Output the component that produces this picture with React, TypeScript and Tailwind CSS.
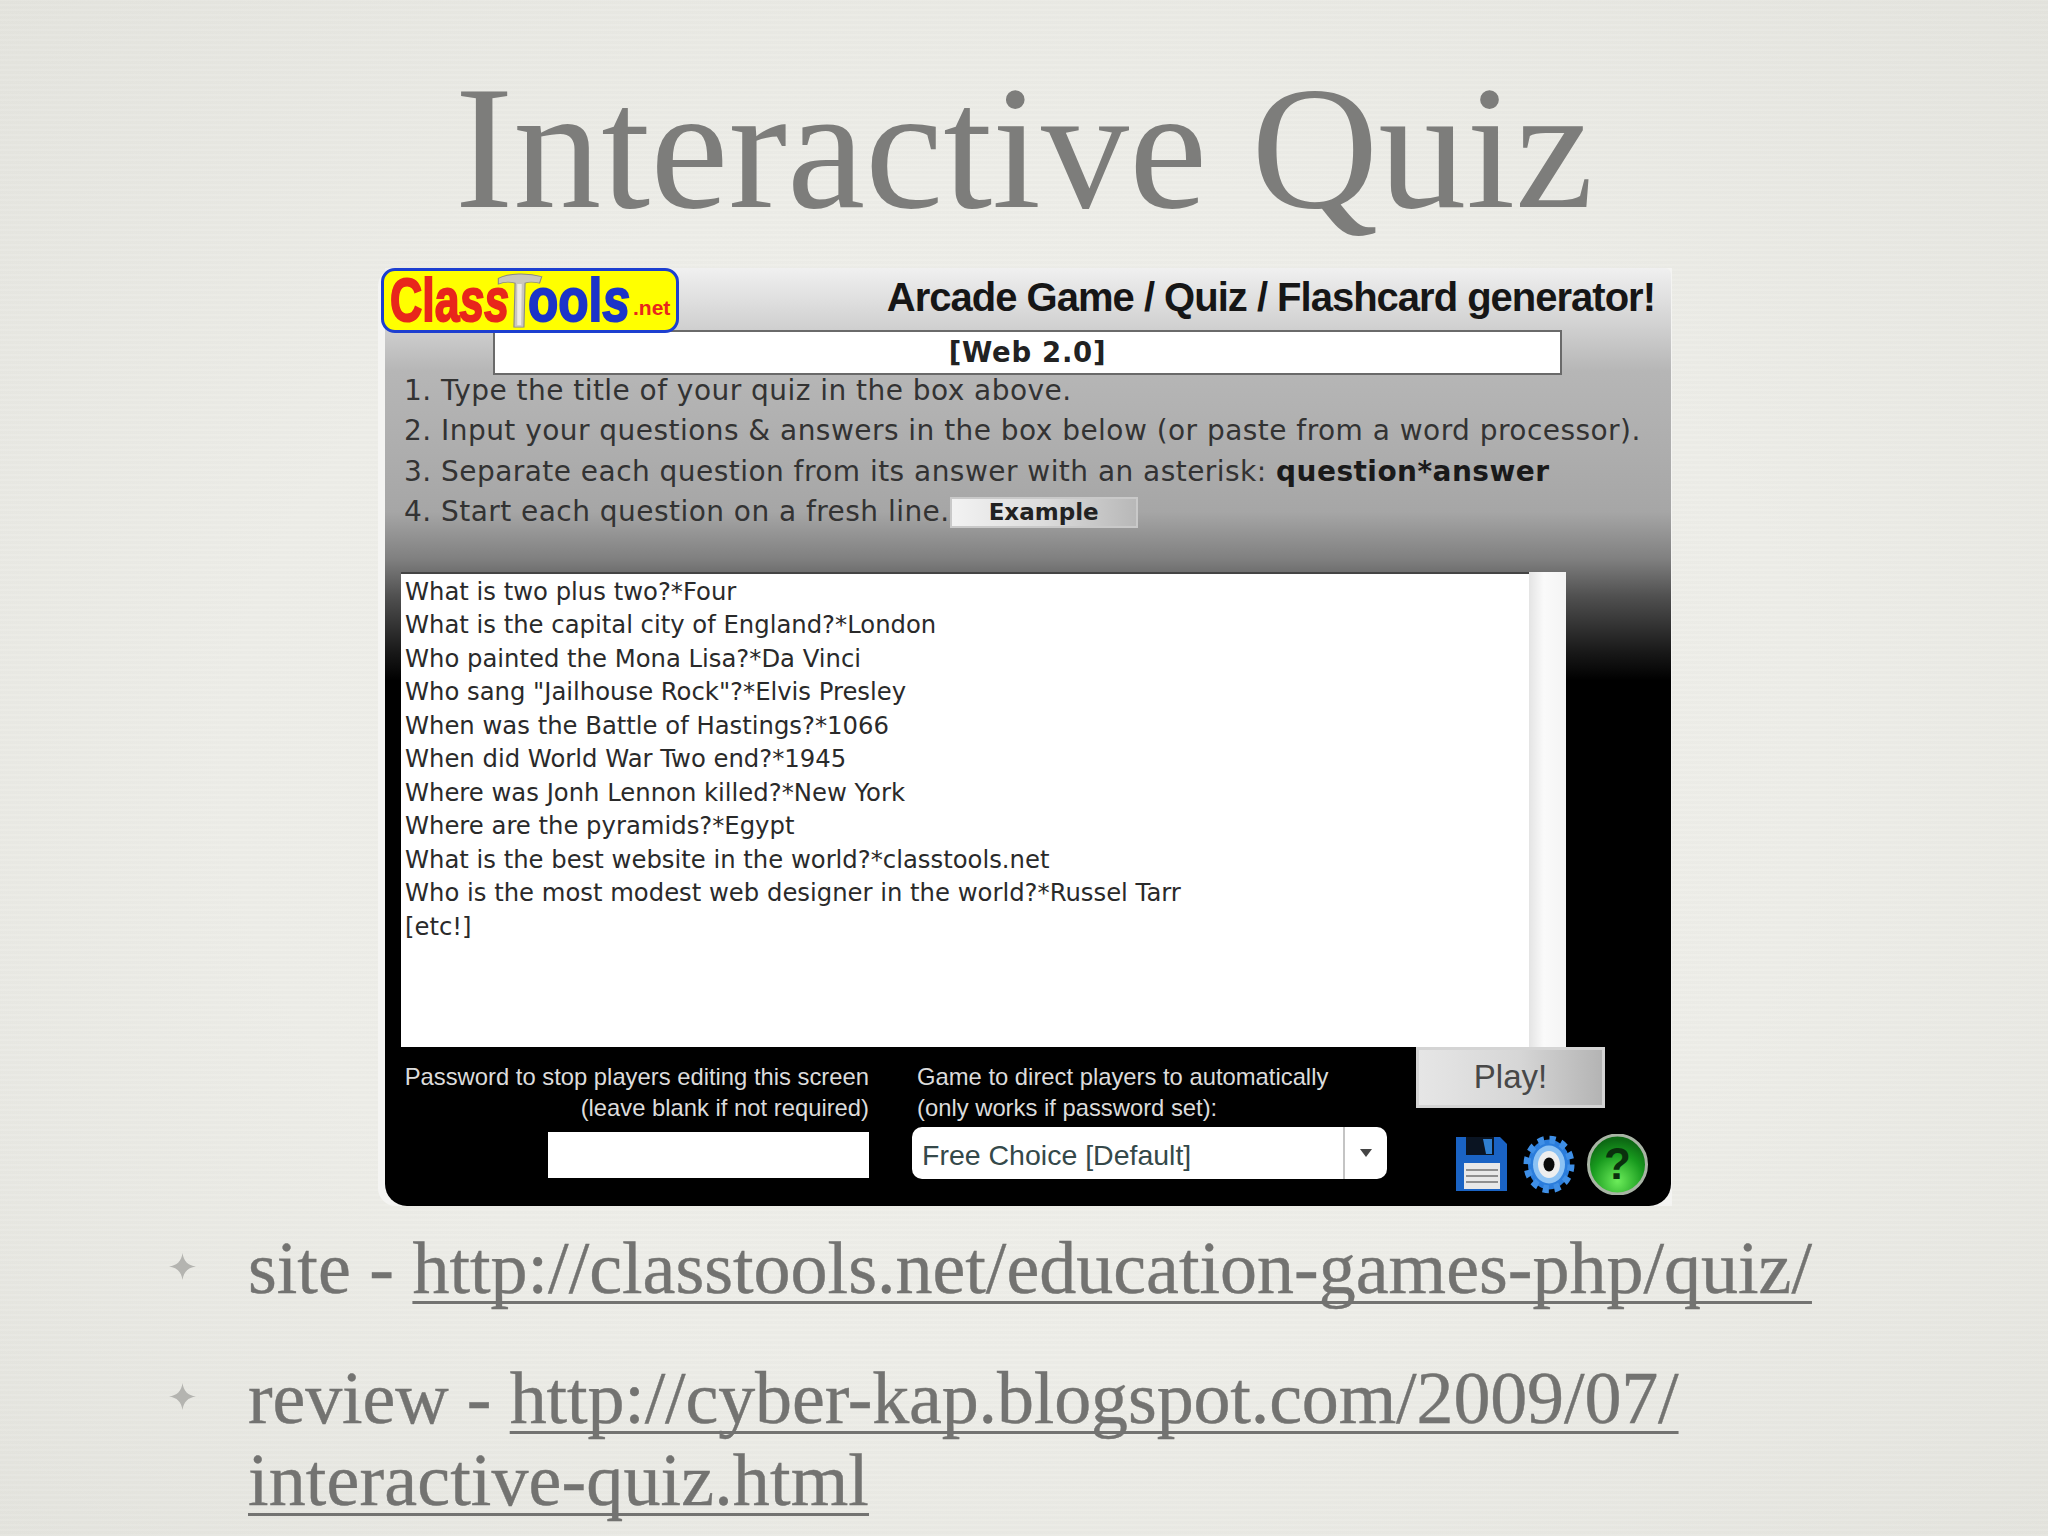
function Star() {
  return (
    <svg width="27" height="27" viewBox="0 0 27 27" className="shrink-0">
      <path d="M13.5 0C14.5 8 19 12.5 27 13.5C19 14.5 14.5 19 13.5 27C12.5 19 8 14.5 0 13.5C8 12.5 12.5 8 13.5 0Z" fill="#b4b4b0" />
    </svg>
  );
}

function Hammer() {
  return (
    <svg width="49" height="58" viewBox="0 0 44 62" preserveAspectRatio="none" className="-mr-[16px] -ml-[15px] shrink-0 self-start">
      <path d="M3 8C12 2 30 2 42 6L40 13C32 11 29 12 27 13L26 60H17L18 13C12 11 7 12 3 14Z" fill="#c9c6bd" stroke="#8a8a84" strokeWidth="1" />
      <path d="M20 14H24L23.5 58H20Z" fill="#efece2" />
    </svg>
  );
}

function Logo() {
  return (
    <div className="relative z-10 -ml-[4px] flex h-[65px] w-[298px] translate-y-[1px] items-center rounded-[14px] border-[3px] border-[#1d3fd0] bg-[#ffff00] pl-[6px] font-['Liberation_Sans',sans-serif] font-bold">
      <span className="inline-block w-[120px] origin-left scale-x-[0.72] text-[62px] leading-none whitespace-nowrap text-[#e8261c] [-webkit-text-stroke:2px_#e8261c]">
        Cla<i>ss</i>
      </span>
      <Hammer />
      <span className="inline-block w-[105px] origin-left scale-x-[0.8] text-[62px] leading-none whitespace-nowrap text-[#1c34c8] [-webkit-text-stroke:2px_#1c34c8]">
        ool<i>s</i>
      </span>
      <span className="mt-[14px] text-[21px] leading-none text-[#e8261c]">.net</span>
    </div>
  );
}

function Floppy() {
  return (
    <svg width="51" height="54" viewBox="0 0 51 54" className="shrink-0">
      <path d="M0 0H44L51 7V54H0Z" fill="#1a63c4" />
      <path d="M10 0H38V18H10Z" fill="#0a1422" />
      <path d="M27 2H36V17H30Z" fill="#2f7fd0" />
      <path d="M8 26H44V52H8Z" fill="#e8e8e8" />
      <path d="M10 33H42M10 39H42M10 45H42" stroke="#8f8f8f" strokeWidth="2" />
    </svg>
  );
}

function Gear() {
  return (
    <svg width="52" height="59" viewBox="0 0 52 59" className="shrink-0">
      <ellipse cx="26" cy="29.5" rx="21" ry="25" fill="#2b7ddc" />
      <circle cx="26" cy="29.5" r="22" fill="none" stroke="#3f8fe6" strokeWidth="7" strokeDasharray="6 5.5" transform="translate(0 -3.9) scale(1 1.13)" />
      <ellipse cx="26" cy="29.5" rx="16" ry="19" fill="#8cc2f4" />
      <ellipse cx="26" cy="29.5" rx="11" ry="13.5" fill="#eeeeee" />
      <ellipse cx="26" cy="29.5" rx="5.5" ry="7" fill="#0a0a0a" />
    </svg>
  );
}

function Help() {
  return (
    <svg width="61" height="61" viewBox="0 0 61 61" className="-ml-[4px] shrink-0">
      <defs>
        <radialGradient id="helpGreen" cx="50%" cy="78%" r="70%">
          <stop offset="0%" stopColor="#6cec5a" />
          <stop offset="65%" stopColor="#189a1e" />
          <stop offset="100%" stopColor="#0d6a14" />
        </radialGradient>
      </defs>
      <ellipse cx="30.5" cy="30.5" rx="29" ry="29.5" fill="url(#helpGreen)" stroke="#a8b4a4" strokeWidth="3" />
      <text x="30.5" y="45" textAnchor="middle" fontSize="44" fontWeight="700" fontFamily="'Liberation Sans', sans-serif" fill="#0a300d">?</text>
    </svg>
  );
}

const steps = [
  "1. Type the title of your quiz in the box above.",
  "2. Input your questions & answers in the box below (or paste from a word processor).",
];

const quizLines = [
  "What is two plus two?*Four",
  "What is the capital city of England?*London",
  "Who painted the Mona Lisa?*Da Vinci",
  'Who sang "Jailhouse Rock"?*Elvis Presley',
  "When was the Battle of Hastings?*1066",
  "When did World War Two end?*1945",
  "Where was Jonh Lennon killed?*New York",
  "Where are the pyramids?*Egypt",
  "What is the best website in the world?*classtools.net",
  "Who is the most modest web designer in the world?*Russel Tarr",
  "[etc!]",
];

function QuizPanel() {
  return (
    <div className="ml-[378px] h-[938px] w-[1294px] rounded-l-[18px] bg-[#f4f4f2] pl-[7px] blur-[0.5px]">
      <div className="h-full w-[1286px] rounded-b-[22px] rounded-tr-[6px] bg-[linear-gradient(180deg,#f0f0f0_0%,#d2d2d2_6%,#b6b6b6_11%,#adadad_20%,#a6a6a6_26%,#808080_31%,#505050_35%,#181818_41%,#000000_44%)]">
        <div className="flex h-[62px] items-center justify-between pr-[16px]">
          <Logo />
          <div className="pb-[4px] font-['Liberation_Sans',sans-serif] text-[40px] font-bold tracking-[-1px] whitespace-nowrap text-[#161616]">
            Arcade Game / Quiz / Flashcard generator!
          </div>
        </div>

        <div className="ml-[108px] flex h-[45px] w-[1069px] items-center justify-center border-2 border-[#6a6a6a] bg-white font-['DejaVu_Sans',sans-serif] text-[27.5px] font-bold tracking-[0.7px] text-[#222]">
          [Web 2.0]
        </div>

        <div className="-mt-[4px] pl-[19px] font-['DejaVu_Sans',sans-serif] text-[28px] leading-[40.4px] tracking-[0.46px] whitespace-nowrap text-[#333]">
          {steps.map((s) => (
            <div key={s}>{s}</div>
          ))}
          <div>
            3. Separate each question from its answer with an asterisk: <b className="text-[#1a1a1a]">question*answer</b>
          </div>
          <div className="flex items-center">
            <span>4. Start each question on a fresh line.</span>
            <button className="flex h-[31px] w-[188px] items-center justify-center border-2 border-[#c9c9c9] bg-[linear-gradient(90deg,#f2f2f2_0%,#dcdcdc_50%,#b8b8b8_100%)] text-[23px] font-bold tracking-normal text-[#222]">
              Example
            </button>
          </div>
        </div>

        <div className="mt-[39px] ml-[16px] flex h-[475px]">
          <div className="w-[1128px] border-t-2 border-[#444] bg-white px-[4px] pt-[1px] font-['DejaVu_Sans',sans-serif] text-[24.3px] leading-[33.5px] whitespace-nowrap text-[#2a2a2a]">
            {quizLines.map((l) => (
              <div key={l}>{l}</div>
            ))}
          </div>
          <div className="w-[37px] bg-[linear-gradient(90deg,#e4e4e4_0%,#fafafa_40%,#f4f4f4_100%)]" />
        </div>

        <div className="flex">
          <div className="w-[484px] pt-[14px] text-right font-['Liberation_Sans',sans-serif] text-[23.8px] leading-[31px] whitespace-nowrap text-[#dcdcdc]">
            <div>Password to stop players editing this screen</div>
            <div>(leave blank if not required)</div>
            <div className="mt-[9px] ml-auto h-[46px] w-[321px] bg-white" />
          </div>
          <div className="ml-[43px] w-[475px] pt-[14px] font-['Liberation_Sans',sans-serif] text-[23.8px] leading-[31px] text-[#dcdcdc]">
            <div className="pl-[5px] whitespace-nowrap">Game to direct players to automatically</div>
            <div className="pl-[5px] whitespace-nowrap">(only works if password set):</div>
            <div className="mt-[4px] flex h-[52px] items-center rounded-[10px] bg-white">
              <span className="flex-1 pt-[5px] pl-[10px] text-[28.5px] text-[#35494a]">Free Choice [Default]</span>
              <span className="flex h-full w-[44px] items-center justify-center border-l-2 border-[#c4c4c4]">
                <svg width="14" height="10" viewBox="0 0 14 10">
                  <path d="M1 1H13L7 9Z" fill="#444" />
                </svg>
              </span>
            </div>
          </div>
          <div className="ml-[29px] w-[232px]">
            <button className="flex h-[61px] w-[189px] items-center justify-center border-[3px] border-[#d4d4d4] bg-[linear-gradient(90deg,#e6e6e6_0%,#d6d6d6_55%,#b4b4b4_100%)] font-['Liberation_Sans',sans-serif] text-[33px] text-[#484848]">
              Play!
            </button>
            <div className="mt-[26px] ml-[40px] flex items-center gap-[16px]">
              <Floppy />
              <Gear />
              <Help />
            </div>
          </div>
        </div>
      </div>
    </div>
  );
}

export default function App() {
  return (
    <div className="h-[1536px] w-[2048px] overflow-hidden bg-[repeating-linear-gradient(0deg,#ffffff05_0px,#ffffff05_2px,#00000003_2px,#00000003_5px),radial-gradient(ellipse_at_center,#f1f1ec_0%,#eeeee9_55%,#e5e5df_100%)] font-['Liberation_Serif',serif]">
      <h1 className="flex h-[268px] justify-center pt-[60px] text-[176px] leading-[176px] font-normal whitespace-nowrap text-[#7d7d7b]">
        Interactive Quiz
      </h1>

      <QuizPanel />

      <div className="pt-[21px] pl-[169px] text-[74px] leading-[82px] text-[#737371] [-webkit-text-stroke:0.4px_#737371]">
        <div className="flex gap-[52px]">
          <div className="pt-[26px]">
            <Star />
          </div>
          <div className="whitespace-nowrap">
            site - <span className="underline decoration-[3px] underline-offset-[8px] [text-decoration-skip-ink:none]">http://classtools.net/education-games-php/quiz/</span>
          </div>
        </div>
        <div className="mt-[48px] flex gap-[52px]">
          <div className="pt-[26px]">
            <Star />
          </div>
          <div className="whitespace-nowrap">
            <div className="tracking-[-0.14px]">
              review - <span className="underline decoration-[3px] underline-offset-[8px] [text-decoration-skip-ink:none]">http://cyber-kap.blogspot.com/2009/07/</span>
            </div>
            <div className="tracking-[0.12px] underline decoration-[3px] underline-offset-[8px] [text-decoration-skip-ink:none]">interactive-quiz.html</div>
          </div>
        </div>
      </div>
    </div>
  );
}
